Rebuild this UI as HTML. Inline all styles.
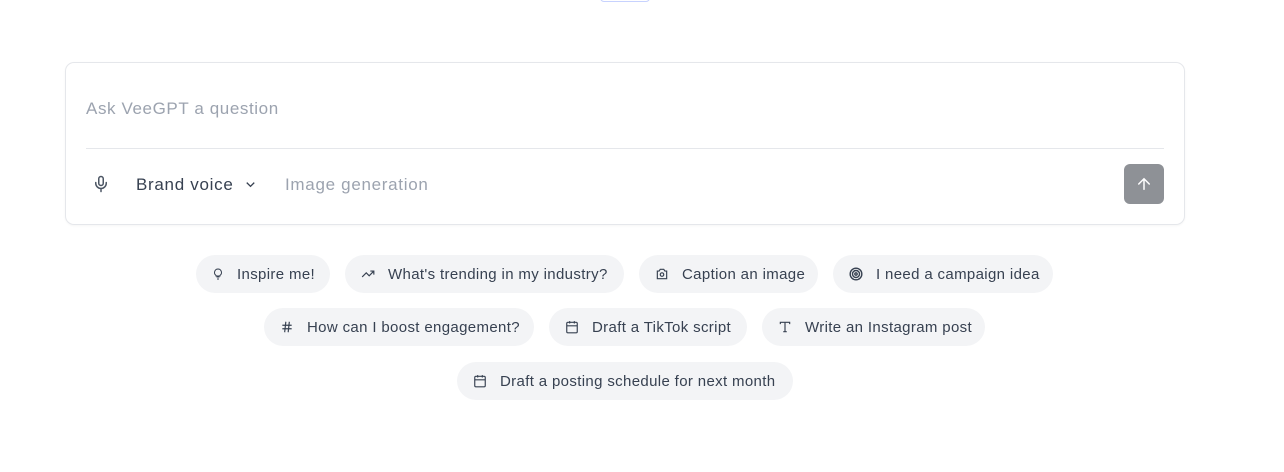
<!DOCTYPE html>
<html><head><style>
*{margin:0;padding:0;box-sizing:border-box}
body{width:1284px;height:472px;background:#fff;font-family:"Liberation Sans",sans-serif;position:relative;overflow:hidden}
.top{position:absolute;left:600px;top:-10px;width:50px;height:12px;border:1px solid #c7d2fe;border-radius:4px}
.card{position:absolute;left:65px;top:62px;width:1120px;height:163px;border:1px solid #e5e7eb;border-radius:9px;box-shadow:0 1px 2px rgba(0,0,0,.04)}
.ph{position:absolute;left:20px;top:36px;font-size:17px;color:#9ca3af;letter-spacing:0.6px}
.div{position:absolute;left:20px;right:20px;top:85px;border-top:1px solid #e5e7eb}
.t{position:absolute;top:112px;font-size:17px;letter-spacing:0.7px}
.send{position:absolute;left:1058px;top:101px;width:40px;height:40px;border-radius:6px;background:#8e9196;display:flex;align-items:center;justify-content:center}
.chip{position:absolute;height:38px;border-radius:19px;background:#f3f4f6;font-size:15px;color:#374151;display:flex;align-items:center;padding-left:16px;white-space:nowrap;letter-spacing:0.35px}
.chip svg{margin-right:13px;flex:none}
</style></head><body>
<div class="top"></div>
<div class="card">
<div class="ph">Ask VeeGPT a question</div>
<div class="div"></div>
<svg style="position:absolute;left:26px;top:111px" width="18" height="20" viewBox="0 0 24 24" fill="none" stroke="#4b5563" stroke-width="2" stroke-linecap="round"><rect x="9" y="2" width="6" height="12" rx="3"/><path d="M5 10v1a7 7 0 0 0 14 0v-1M12 18v4"/></svg>
<div class="t" style="left:70px;color:#374151">Brand voice</div>
<svg style="position:absolute;left:177px;top:114px" width="15" height="15" viewBox="0 0 24 24" fill="none" stroke="#374151" stroke-width="2"><path d="M6 9l6 6 6-6"/></svg>
<div class="t" style="left:219px;color:#9ca3af">Image generation</div>
<div class="send"><svg width="18" height="18" viewBox="0 0 24 24" fill="none" stroke="#fff" stroke-width="2" stroke-linecap="round"><path d="M12 19V5M5 12l7-7 7 7"/></svg></div>
</div>

<div class="chip" style="left:196px;top:255px;width:134px"><svg width="12" height="14" viewBox="0 0 24 24" fill="none" stroke="#374151" stroke-width="2"><path d="M9 18h6M10 22h4M12 2a7 7 0 0 0-4 12.7V16h8v-1.3A7 7 0 0 0 12 2z"/></svg>Inspire me!</div>
<div class="chip" style="left:345px;top:255px;width:279px"><svg width="14" height="14" viewBox="0 0 24 24" fill="none" stroke="#374151" stroke-width="2"><path d="M2 17l7-7 5 5 8-8M16 7h6v6"/></svg>What's trending in my industry?</div>
<div class="chip" style="left:639px;top:255px;width:179px"><svg width="14" height="14" viewBox="0 0 24 24" fill="none" stroke="#374151" stroke-width="2"><path d="M4 7h3l2-3h6l2 3h3v13H4z"/><circle cx="12" cy="13" r="3"/></svg>Caption an image</div>
<div class="chip" style="left:833px;top:255px;width:220px"><svg width="14" height="14" viewBox="0 0 24 24" fill="none" stroke="#374151" stroke-width="2.4"><circle cx="12" cy="12" r="10"/><circle cx="12" cy="12" r="6"/><circle cx="12" cy="12" r="2"/></svg>I need a campaign idea</div>

<div class="chip" style="left:264px;top:308px;width:270px"><svg width="14" height="14" viewBox="0 0 24 24" fill="none" stroke="#374151" stroke-width="2"><path d="M4 9h16M4 15h16M10 3L8 21M16 3l-2 18"/></svg>How can I boost engagement?</div>
<div class="chip" style="left:549px;top:308px;width:198px"><svg width="14" height="14" viewBox="0 0 24 24" fill="none" stroke="#374151" stroke-width="2"><rect x="3" y="4" width="18" height="18" rx="2"/><path d="M3 10h18M8 2v4M16 2v4"/></svg>Draft a TikTok script</div>
<div class="chip" style="left:762px;top:308px;width:223px"><svg width="14" height="14" viewBox="0 0 24 24" fill="none" stroke="#374151" stroke-width="2"><path d="M4 7V4h16v3M12 4v16M9 20h6"/></svg>Write an Instagram post</div>

<div class="chip" style="left:457px;top:362px;width:336px"><svg width="14" height="14" viewBox="0 0 24 24" fill="none" stroke="#374151" stroke-width="2"><rect x="3" y="4" width="18" height="18" rx="2"/><path d="M3 10h18M8 2v4M16 2v4"/></svg>Draft a posting schedule for next month</div>
</body></html>
